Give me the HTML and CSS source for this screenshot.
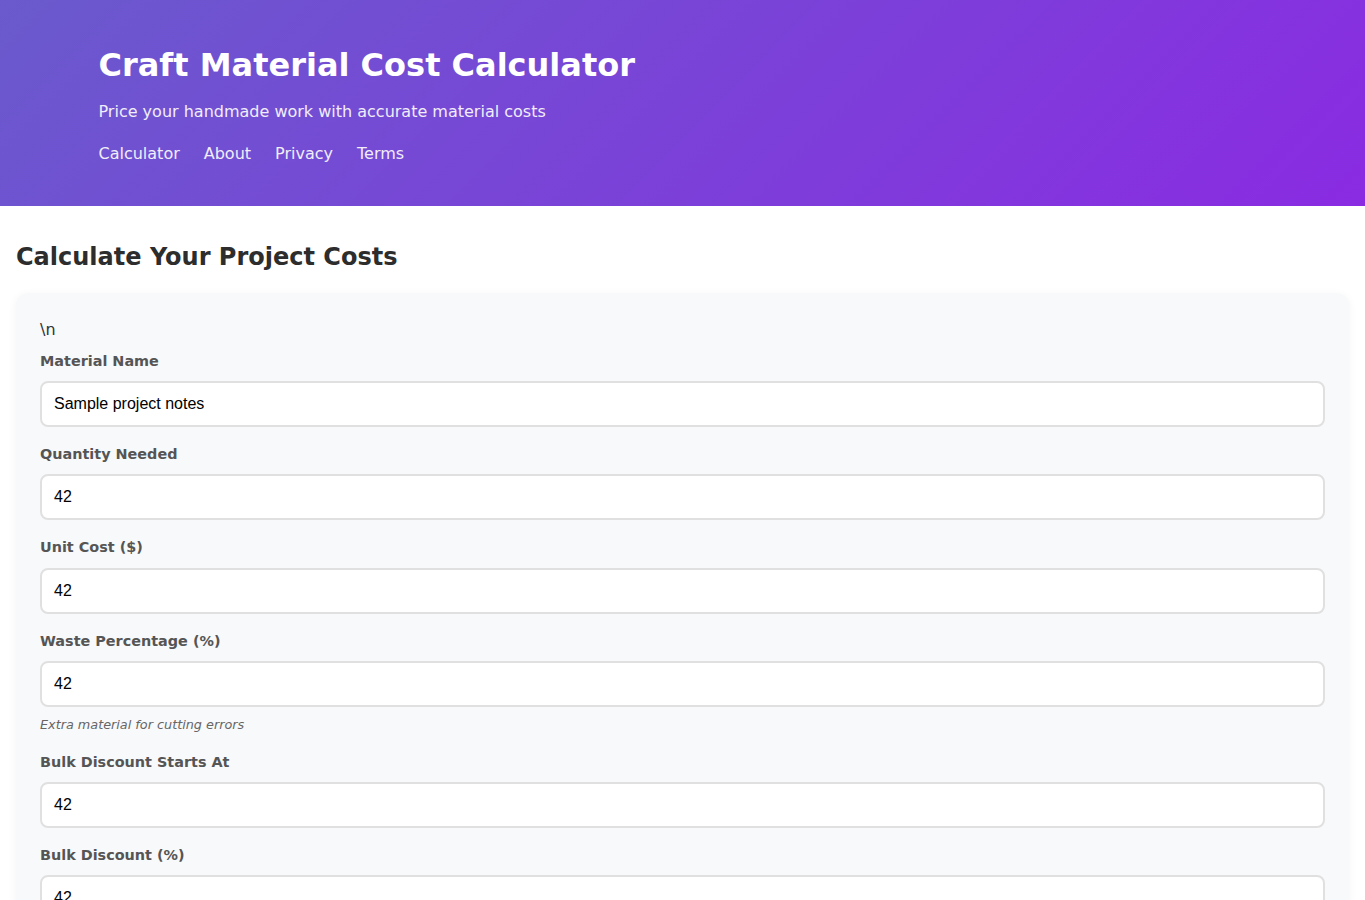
FILE: index.html
```
<!DOCTYPE html>
<html lang="en">
  <head>
    <meta charset="UTF-8" />
    <meta name="viewport" content="width=device-width, initial-scale=1.0" />
    <title>Craft Material Cost Calculator</title>
    <link rel="stylesheet" href="styles.css">
  </head>
  <body>
    <header class="site-header">
      <div class="container">
        <h1>Craft Material Cost Calculator</h1>
        <p class="tagline">Price your handmade work with accurate material costs</p>
        <nav class="nav">
          <a href="#">Calculator</a>
          <a href="#">About</a>
          <a href="#">Privacy</a>
          <a href="#">Terms</a>
        </nav>
      </div>
    </header>

    <main class="main">
      <h2>Calculate Your Project Costs</h2>

      <div class="calc-card">
        \n
        <form class="calc-form">
          <div class="form-group">
            <label for="material">Material Name</label>
            <input type="text" id="material" value="Sample project notes" />
          </div>
          <div class="form-group">
            <label for="qty">Quantity Needed</label>
            <input type="number" id="qty" value="42" />
          </div>
          <div class="form-group">
            <label for="unit">Unit Cost ($)</label>
            <input type="number" id="unit" value="42" />
          </div>
          <div class="form-group">
            <label for="waste">Waste Percentage (%)</label>
            <input type="number" id="waste" value="42" />
            <small class="hint">Extra material for cutting errors</small>
          </div>
          <div class="form-group">
            <label for="bulkAt">Bulk Discount Starts At</label>
            <input type="number" id="bulkAt" value="42" />
          </div>
          <div class="form-group">
            <label for="bulk">Bulk Discount (%)</label>
            <input type="number" id="bulk" value="42" />
          </div>
        </form>
      </div>
    </main>
  </body>
</html>
```

FILE: styles.css
```
* {
  box-sizing: border-box;
}

body {
  font-family: "DejaVu Sans", sans-serif;
  margin: 0;
  padding: 0;
  color: #333;
  line-height: 1.6;
  background: #fff;
}

.site-header {
  background: linear-gradient(135deg, #6a5acd, #8a2be2);
  color: #fff;
  padding: 40px 0;
}

.container {
  max-width: 1200px;
  margin: 0 auto;
  padding: 0 16px;
}

.site-header h1 {
  font-size: 32px;
  margin: 0 0 8px;
}

.tagline {
  margin: 0 0 16px;
  font-size: 16px;
  opacity: 0.9;
}

.nav {
  display: flex;
  gap: 24px;
}

.nav a {
  color: #fff;
  text-decoration: none;
  opacity: 0.9;
}

.main {
  padding: 32px 16px;
}

.main h2 {
  font-size: 24px;
  margin: 0 0 16px;
  color: #2d2d2d;
}

.calc-card {
  background: #f8f9fa;
  border-radius: 12px;
  padding: 24px;
  box-shadow: 0 2px 10px rgba(0, 0, 0, 0.05);
}

.calc-form {
  margin-top: 8px;
}

.form-group {
  margin-bottom: 16px;
}

.form-group label {
  display: block;
  font-size: 14.4px;
  font-weight: bold;
  color: #555;
  margin-bottom: 8px;
}

.form-group input {
  width: 100%;
  padding: 12px;
  border: 2px solid #e0e0e0;
  border-radius: 8px;
  font-family: "Liberation Sans", Arial, sans-serif;
  font-size: 16px;
  background: #fff;
}

.hint {
  display: block;
  margin-top: 8px;
  font-size: 12.8px;
  line-height: 1.6;
  font-style: italic;
  color: #666;
}
```
